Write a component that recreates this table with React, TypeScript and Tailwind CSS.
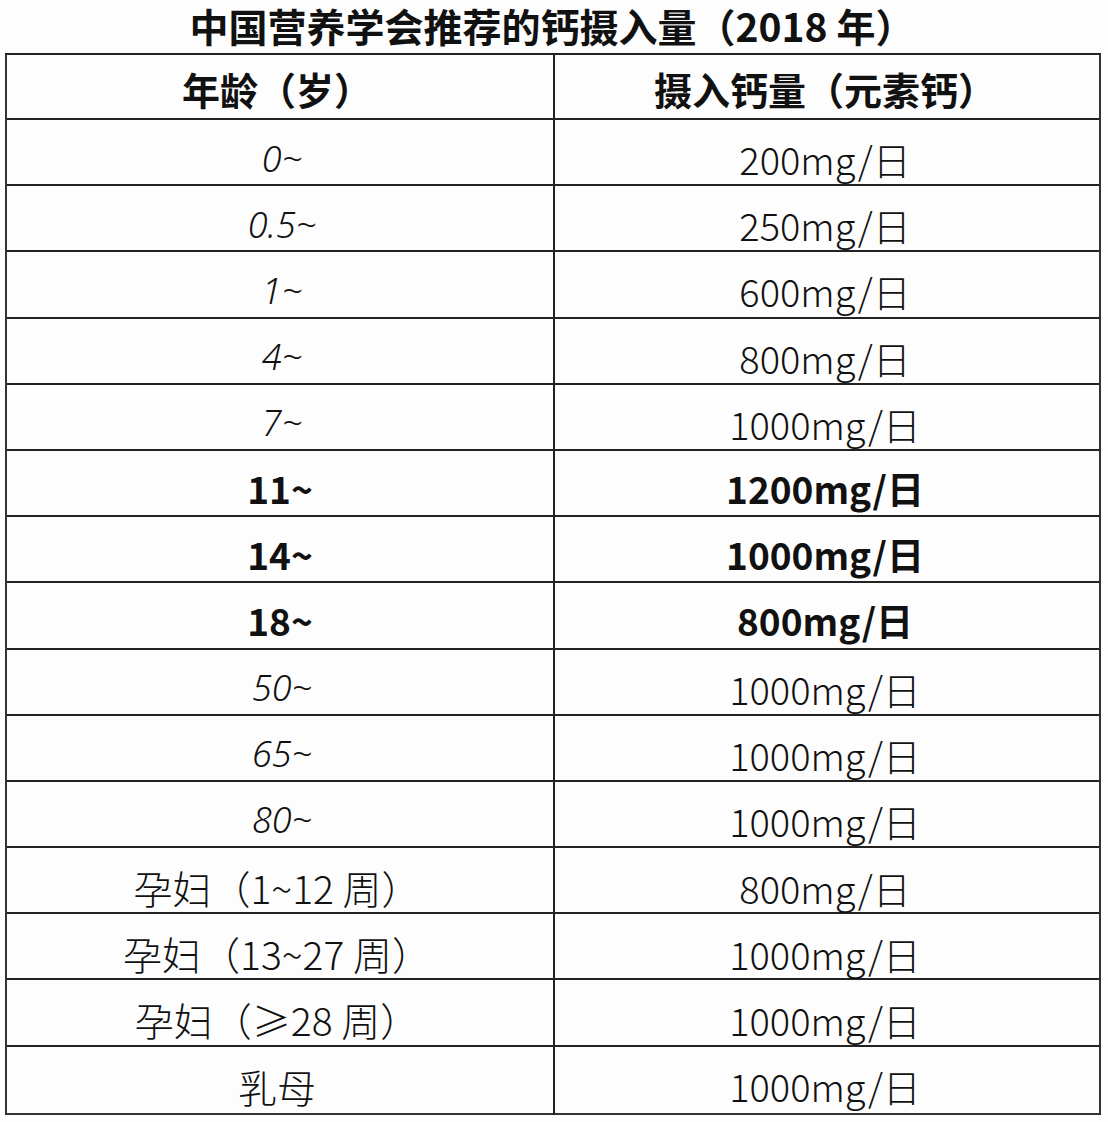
import React from "react";

type Row = { age: string; amount: string; kind: "italic" | "bold" | "cjk" };

const rows: Row[] = [
  { age: "0~", amount: "200mg/日", kind: "italic" },
  { age: "0.5~", amount: "250mg/日", kind: "italic" },
  { age: "1~", amount: "600mg/日", kind: "italic" },
  { age: "4~", amount: "800mg/日", kind: "italic" },
  { age: "7~", amount: "1000mg/日", kind: "italic" },
  { age: "11~", amount: "1200mg/日", kind: "bold" },
  { age: "14~", amount: "1000mg/日", kind: "bold" },
  { age: "18~", amount: "800mg/日", kind: "bold" },
  { age: "50~", amount: "1000mg/日", kind: "italic" },
  { age: "65~", amount: "1000mg/日", kind: "italic" },
  { age: "80~", amount: "1000mg/日", kind: "italic" },
  { age: "孕妇（1~12 周）", amount: "800mg/日", kind: "cjk" },
  { age: "孕妇（13~27 周）", amount: "1000mg/日", kind: "cjk" },
  { age: "孕妇（≥28 周）", amount: "1000mg/日", kind: "cjk" },
  { age: "乳母", amount: "1000mg/日", kind: "cjk" },
];

const cjk = "font-['Noto_Sans_CJK_SC',sans-serif]";

export default function App() {
  return (
    <div className={`w-[1108px] h-[1122px] bg-[#fdfdfd] text-[#111] ${cjk}`}>
      <div className="h-[53px] flex items-start justify-center text-[39px] font-bold leading-[50px] pr-[4px]">
        中国营养学会推荐的钙摄入量（2018 年）
      </div>
      <div className="ml-[5px] w-[1096px] border-2 border-[#333] border-t-[#222]">
        <div className="grid grid-cols-[548px_1fr] h-[65px] border-b-2 border-[#222]">
          <div className="flex items-center justify-center border-r-2 border-[#222] text-[38px] font-bold pt-[4px] pr-[6px]">
            年龄（岁）
          </div>
          <div className="flex items-center justify-center text-[38px] font-bold pt-[4px] pr-[4px]">
            摄入钙量（元素钙）
          </div>
        </div>
        {rows.map((r, i) => (
          <div
            key={i}
            className={`grid grid-cols-[548px_1fr] h-[66.2px] ${i < rows.length - 1 ? "border-b-2 border-[#222]" : ""}`}
          >
            <div className="flex items-center justify-center border-r-2 border-[#222] pt-[10px]">
              {r.kind === "italic" && (
                <span className="font-['Noto_Sans',sans-serif] italic font-light text-[36px] pl-[4px]">{r.age}</span>
              )}
              {r.kind === "bold" && (
                <span className="font-['Noto_Sans_CJK_SC',sans-serif] font-bold text-[37px]">{r.age}</span>
              )}
              {r.kind === "cjk" && (
                <span className="text-[39px] font-light pr-[6px]">{r.age}</span>
              )}
            </div>
            <div className="flex items-center justify-center pt-[10px] pr-[4px]">
              <span className={`${r.kind === "bold" ? "font-bold text-[37px]" : "font-light text-[38px]"}`}>{r.amount}</span>
            </div>
          </div>
        ))}
      </div>
    </div>
  );
}
